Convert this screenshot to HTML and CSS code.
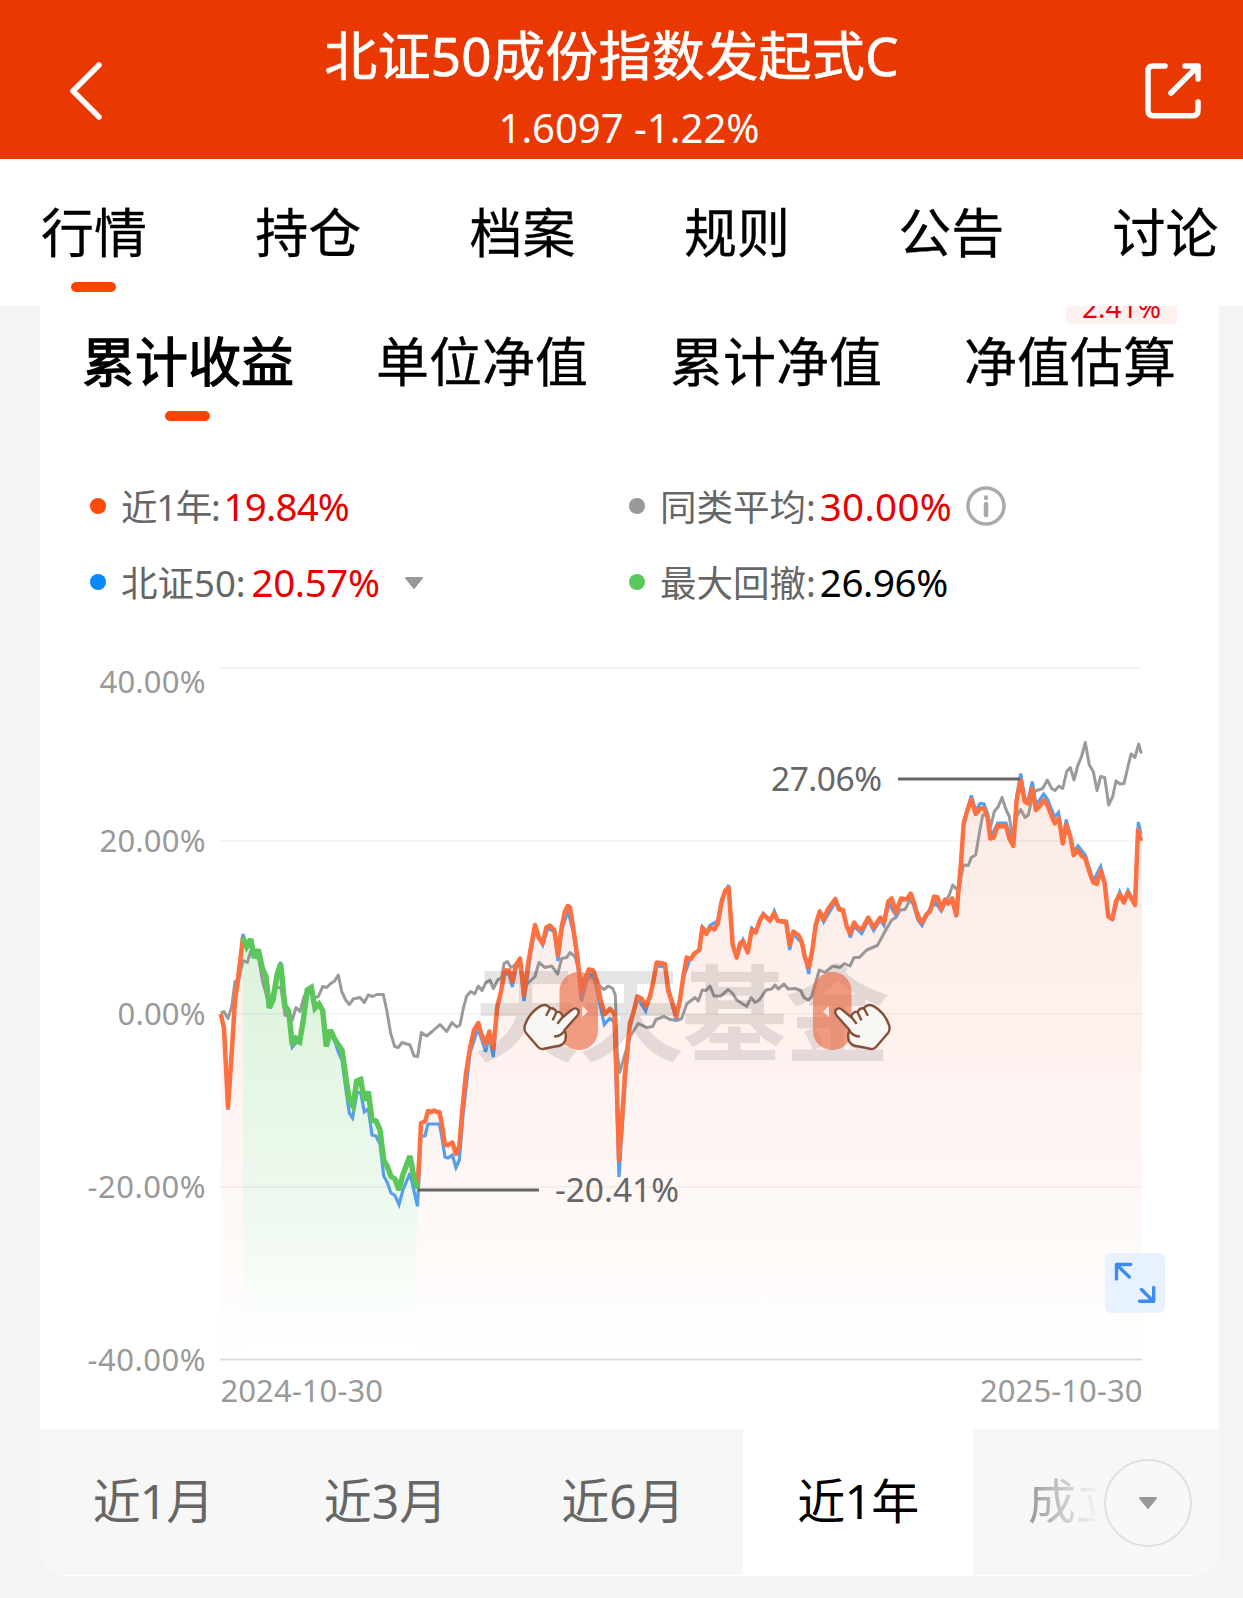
FILE: index.html
```
<!DOCTYPE html>
<html lang="zh-CN">
<head>
  <meta charset="utf-8">
  <title>北证50成份指数发起式C</title>
  <link rel="stylesheet" href="styles.css">
</head>
<body>

<header>
  <svg class="back" width="34" height="60" viewBox="0 0 34 60">
    <path d="M30 4 L4 30 L30 56"/>
  </svg>
  <div class="fund">
    <h1>北证50成份指数发起式C</h1>
    <p>1.6097 -1.22%</p>
  </div>
  <svg class="share" width="58" height="58" viewBox="0 0 58 58">
    <path d="M21 4 H9 Q4 4 4 9 V48 Q4 53.700 9 53.700 H49 Q54 53.700 54 48 V40"/>
    <path d="M41 4 H54 V17 M53 5 L27 31"/>
  </svg>
</header>

<nav>
  <a class="active">行情</a>
  <a>持仓</a>
  <a>档案</a>
  <a>规则</a>
  <a>公告</a>
  <a>讨论</a>
</nav>

<div id="card">
  <div class="tabs">
    <a class="active">累计收益</a>
    <a>单位净值</a>
    <a>累计净值</a>
    <a>净值估算<span class="badge"><b>2.41%</b></span></a>
  </div>

  <div class="legend">
    <div><i class="dot orange"></i><em>近1年:</em><span class="red n1">19.84%</span></div>
    <div><i class="dot gray"></i>同类平均:<span class="red n3">30.00%</span>
      <svg class="info" width="40" height="40" viewBox="0 0 40 40">
        <circle cx="20" cy="20" r="18"/>
        <path d="M20 18 V29"/>
        <path d="M20 11.500 V12"/>
      </svg>
    </div>
    <div><i class="dot blue"></i>北证50:<span class="red n2">20.57%</span>
      <svg class="caret" width="20" height="13" viewBox="0 0 20 13"><path d="M2 1 H18 L10 11 Z"/></svg>
    </div>
    <div><i class="dot green"></i>最大回撤:<span class="black">26.96%</span></div>
  </div>

  <svg class="chart" width="1179" height="789" viewBox="40 640 1179 789">
    <defs>
      <linearGradient id="redFill" gradientUnits="userSpaceOnUse" x1="0" y1="780" x2="0" y2="1359">
        <stop offset="0" stop-color="#f9e9e3"/>
        <stop offset="0.45" stop-color="#fef1ee"/>
        <stop offset="0.75" stop-color="#fef8f6"/>
        <stop offset="1" stop-color="#ffffff"/>
      </linearGradient>
      <linearGradient id="greenFill" gradientUnits="userSpaceOnUse" x1="0" y1="940" x2="0" y2="1350">
        <stop offset="0" stop-color="#d9f2d9"/>
        <stop offset="0.65" stop-color="#edf9ee"/>
        <stop offset="1" stop-color="#ffffff"/>
      </linearGradient>
    </defs>

    <!-- areas under the fund line -->
    <path opacity="0.95" fill="url(#redFill)" d="M220.700 1359 V1014 L224 1028 228 1107 231.700 1053 235 1000 237.300 985 243 937 V1359 Z"/>
    <path opacity="0.95" fill="url(#redFill)" d="M417.500 1359 V1188.500 L419.300 1156.500 421 1123 425 1121.500 428 1111 439.300 1112 441.700 1123 445 1145 452.300 1143 456 1154 459.300 1146.500 462.300 1110 466 1073 470 1048 474 1030 478.300 1023 481.700 1035 485.700 1044 489.300 1031.500 493.300 1048 497.300 1006.500 501 991.500 504.700 970.500 509 970.500 512.300 981.500 516 965 520 958.500 524 995 527.700 966.500 531.300 945 535 925 538.700 937.500 542.700 943.500 546.300 927.500 550 925.500 554.300 930 558 955 561.700 926.500 565 911.500 567.700 906 570 907.500 573.300 928 577.300 956.500 581.300 991.500 585.300 978 588.700 969.500 593.300 970.500 596.700 980 600.700 1000 604.700 1014 610 1009 614.300 1013.500 616.700 1080 619 1160 622 1120 625 1073 630 1023 633.700 1011.500 637.300 996.500 641.700 998.500 645.700 1006.500 650 996.500 653.300 981.500 656.700 962.500 665 964 668 990 672.300 1003 676.300 1016.500 680 1000 683.300 976.500 686.700 957.500 691 959 694.300 953.500 699.300 950 702.300 927.500 706.300 934 710 927.500 714.300 929.500 717.700 923.500 721.700 901.500 725.300 890.500 728.700 888 732.700 945 736.700 957.500 740 943.500 743 941 747.700 952.500 751.700 930 755.700 932.500 760 920 763.300 914.500 770 920.500 774.300 913.500 778 921 786 921.500 789.700 945 793.300 931.500 798.300 935 801.700 941.500 804.700 956.500 808.700 967.500 812.300 950 815.700 925 819.700 911.500 823.700 919.500 827.700 909.500 835.300 899 839 909.500 843 910 846.700 926.500 850.300 933.500 854 922.500 857.700 927.500 861.700 929.500 868.300 917.500 873.700 927.500 880.300 917.500 884 922.500 888.300 901.500 891.700 898.500 895.700 912.500 901 898.500 906.700 899.500 910.700 893.500 914.300 903.500 918 917.500 922 922.500 926.700 914 930 911.500 934 896.500 937.700 897.500 941.300 909.500 945 899.500 948.300 903.500 952.300 898.500 956.300 915 960.700 866.500 963.700 823.500 967.300 810.500 971.300 799.500 975.700 814 980 808.500 984 808.500 987.700 817.500 990.300 838.500 993.700 837.500 997.700 826 1006 826.500 1009.300 838.500 1013.300 846 1016.700 800 1020.700 780.500 1024.700 801.500 1028 803.500 1032.300 788.500 1036 810 1040 806 1043.700 800 1047.300 805 1054.700 823.500 1059 818.500 1062.700 843.500 1066.300 825 1070.300 836.500 1073.700 855 1078 850.500 1081.700 856 1085.300 858.500 1090 873.500 1093.300 882.500 1096.700 884 1100.700 870.500 1104.700 883.500 1108.300 916.500 1112.300 919 1116 901.500 1119.700 894 1123.700 902.500 1128 892.500 1135 905 1138 830 1141 841 1142 841 V1359 Z"/>
    <path opacity="0.95" fill="url(#greenFill)" d="M243 1359 V937.500 L246.700 946.500 250.700 939 254.300 958 258.300 949.500 262.300 968 266 976.500 269.300 1008 273 1000 277 975 280.700 964 284.700 1005 288.700 1011.500 292.300 1045 296 1038.500 299.700 1041.500 303.300 1020 307.300 990 311.300 987.500 315 1008 319 1004 322.700 1010.500 326.300 1046.500 330.300 1030 334.300 1038.500 338.300 1045 342 1050 345.700 1076.500 349.300 1100 353 1106 356.700 1081 360.700 1079.500 364.300 1100.500 368.300 1091.500 372 1120 376 1121 380 1130 383.700 1160 387.300 1166.500 391 1176.500 395 1179 399 1190 402.700 1175 410 1156 413.700 1176.500 417.500 1188.500 V1359 Z"/>

    <g class="grid">
      <path d="M220 668 H1142 M220 841 H1142 M220 1014 H1142 M220 1187 H1142"/>
      <path class="base" d="M220 1359.500 H1142"/>
    </g>

    <path class="line avg" d="M220.700 1013 L224 1011.500 228 1018.500 231.700 1006.500 235 981.500 238.700 980 243 960.500 247.300 962.500 250.700 951.500 254.300 955 258.300 956.500 262.300 980 266.700 996.500 270 1003.500 274 990 277 987.500 281 987.500 285 1015 289 1016.500 292.300 1020 296 1007.500 300 1011.500 304 996.500 308 990 315 997.500 318.300 996.500 322.700 986.500 326.700 987.500 330.700 983.500 334.700 981 338.300 975 341.700 991.500 345.700 1000 349.300 1004.500 353.300 999 360 997.500 364.300 1002.500 368.300 995 372.700 996.500 376.700 994.500 383.300 994.500 386.700 1010 390.700 1033.500 394.700 1046.500 398.300 1047.500 402 1042.500 410 1045 414 1056 417.700 1056.500 421.300 1032.500 426.700 1036 432.700 1031 440 1024.500 446.700 1031.500 452 1022.500 456.700 1027 460 1025 463.300 1008.500 466.700 996 470.700 991.500 474.700 994 478.300 986 482 990.500 486 982.500 490 980 493.300 988.500 497.700 980 501.700 977.500 504 963.500 507.300 961.500 511 967.500 515 965 519.300 961.500 523.300 976.500 527.700 983.500 535 976.500 539 962.500 545 967.500 551.700 966 557.700 974 561.700 958.500 566.700 957.500 570 952.500 575 956.500 580 976 585 983.500 590 976.500 595 980 600 986.500 604 989.500 608.300 986 612.700 988.500 615.300 995 617.300 1053 619.700 1072.500 623.300 1060 630 1036.500 638.300 1023.500 646.700 1027.500 652.700 1026.500 656 1019.500 664 1016.500 670 1019.500 676.700 1020.500 681.700 1018.500 686.700 1004 695 997.500 698.300 1001 702.300 990 706 990.500 710 986 714 996 720.700 996 728.300 989.500 732.700 993.500 736.700 1000 746.700 1006.500 751 997.500 755 1002.500 759.300 1000 766 990 771.700 989 775 985 778.300 989 784 984 788.300 989 795 988.500 800.700 990.500 804 997.500 808.300 1000 811.700 996.500 815 985 819.300 970 825 972.500 832.700 966 840 967.500 844.300 963.500 850 966 854 957.500 859.300 957.500 866.700 950 877.300 945.500 886.700 928.500 891.700 920 896 917.500 900 910 905 909.500 910 900 914 905 922 922 930 911 933 905 937 905 941 909 949.300 895 952.700 885 956.700 889.500 960 884 963.300 865 968.300 865.500 971.300 857.500 975.700 855 979.300 833.500 982.700 815 987.300 815 990.700 826.500 994.300 811.500 998.300 806.500 1002 797.500 1006 809.500 1009.300 816.500 1012.300 836.500 1016.700 816.500 1020.700 809.500 1025 817.500 1028.300 815 1031.700 800 1035 791 1042.700 788.500 1047.300 780 1051.700 788.500 1055 790.500 1059 786 1062.700 788.500 1066.700 771.500 1070.300 767.500 1074 780 1078 765 1081.700 756 1085.300 742.500 1089.300 765 1093.300 771.500 1097 790.500 1100.700 776.500 1104.700 777.500 1108.700 805 1112.700 796.500 1116 781 1120 784 1124 783.500 1128 766.500 1131 754 1135 757.500 1138.700 744 1141.300 753.500"/>

    <!-- index line, only the stretches that come out from behind the fund line -->
    <path class="line idx" d="M224 1028 L228 1110 231.700 1053 M239 975 L243 934 246 946 M277 975 L280.700 962 284 1000 M288.700 1015 L292.300 1047 296 1042.500 299.700 1043 304 1015 M330 1030 L334.300 1040 338.300 1052 342 1060 345.700 1088 349.300 1113 352.500 1118 357 1093 360.700 1092.500 364.300 1112 368.300 1109 372 1135 376 1136 380 1144 383.700 1176 387.300 1182.500 391 1193 395 1195.500 399 1204.500 403 1190 410 1173 417.500 1206.500 421 1136 425 1136 428 1124 439.300 1124 441.700 1136 445 1157 448 1158 452.300 1155 456 1167.500 459.300 1160 463 1115 470 1053 478 1028 485.700 1052 489.300 1036 493.300 1057 497.300 1010 504.700 974 509 974 512.300 987 516 969 520 962 524 1001 531.300 950 535 930 542.700 945 548 928 554.300 932 558 961 561.700 930 568 911 573.300 932 577.300 960 581.300 1001 588.700 974 593.300 975 600.700 1008 604.300 1024.500 609.700 1018.500 614.300 1022 619 1177 625 1083 630 1028 637.300 998 645.700 1011 653.300 983 656.700 966 665 967 672 1005 676.300 1020 683 979 690 959 699.300 950 702.300 927 706.300 932 710 925.500 717.700 921 721.700 899 728.700 885 732.700 945 736.700 957 743 940 747.700 952 751.700 928 755.700 931 763.300 913.500 770 921 774.300 911 778 921 786 923 789.700 950 793.300 934 801.700 943 808.700 974 815.700 927 819.700 913 823.700 922 835.300 902 843 912 850.300 937.500 854 926 861.700 933.500 868.300 920 873.700 930.500 880.300 920 884 925.500 888.300 903 895.700 915 901 901 910.700 896 918 920 922 925.500 934 900 941.300 911 945 903 952.300 902 956.300 917 960.700 866 963.700 822 971.300 795.500 975.700 811 980 803.500 984 804 987.700 814 991 837 997.700 823 1006 823 1013.300 845 1016.700 796 1020.700 773.500 1024.700 798 1028 800 1032.300 781.500 1036 805 1043.700 794 1047.300 799 1054.700 817 1058.500 812.500 1062.700 840 1066.300 819.500 1073.700 852 1078 846 1085.300 855 1093.300 881 1100.700 866.500 1104.700 882 1108.300 915 1112.300 919 1119.700 892 1123.700 901 1128 890.500 1135 903 1138.300 822 1141 834"/>

    <path class="line fund-line" d="M220.700 1014 L224 1028 228 1107 231.700 1053 235 1000 237.300 985 243 937"/>
    <path class="line fund-line" d="M417.500 1188.500 L419.300 1156.500 421 1123 425 1121.500 428 1111 431 1112 434 1110.500 437 1112 439.300 1112 441.700 1123 445 1145 448 1145 452.300 1142.500 456 1154 459.300 1146.500 462.300 1110 466 1073 470 1048 474 1030 478.300 1023 481.700 1035 485.700 1044 489.300 1031.500 493.300 1048 497.300 1006.500 501 991.500 504.700 970.500 509 970.500 512.300 981.500 516 965 520 958.500 524 995 527.700 966.500 531.300 945 535 925 538.700 937.500 542.700 943.500 546.300 927.500 550 925.500 554.300 930 558 955 561.700 926.500 565 911.500 567.700 906 570 907.500 573.300 928 577.300 956.500 581.300 991.500 585.300 978 588.700 969.500 593.300 970.500 596.700 980 600.700 1000 604.700 1014 610 1009 614.300 1013.500 616.700 1080 619 1160 622 1120 625 1073 630 1023 633.700 1011.500 637.300 996.500 641.700 998.500 645.700 1006.500 650 996.500 653.300 981.500 656.700 962.500 665 964 668 990 672.300 1003 676.300 1016.500 680 1000 683.300 976.500 686.700 957.500 691 959 694.300 953.500 699.300 950 702.300 927.500 706.300 934 710 927.500 714.300 929.500 717.700 923.500 721.700 901.500 725.300 890.500 728.700 888 732.700 945 736.700 957.500 740 943.500 743 941 747.700 952.500 751.700 930 755.700 932.500 760 920 763.300 914.500 770 920.500 774.300 913.500 778 921 786 921.500 789.700 945 793.300 931.500 798.300 935 801.700 941.500 804.700 956.500 808.700 967.500 812.300 950 815.700 925 819.700 911.500 823.700 919.500 827.700 909.500 835.300 899 839 909.500 843 910 846.700 926.500 850.300 933.500 854 922.500 857.700 927.500 861.700 929.500 868.300 917.500 873.700 927.500 880.300 917.500 884 922.500 888.300 901.500 891.700 898.500 895.700 912.500 901 898.500 906.700 899.500 910.700 893.500 914.300 903.500 918 917.500 922 922.500 926.700 914 930 911.500 934 896.500 937.700 897.500 941.300 909.500 945 899.500 948.300 903.500 952.300 898.500 956.300 915 960.700 866.500 963.700 823.500 967.300 810.500 971.300 799.500 975.700 814 980 808.500 984 808.500 987.700 817.500 990.300 838.500 993.700 837.500 997.700 826 1006 826.500 1009.300 838.500 1013.300 846 1016.700 800 1020.700 780.500 1024.700 801.500 1028 803.500 1032.300 788.500 1036 810 1040 806 1043.700 800 1047.300 805 1054.700 823.500 1059 818.500 1062.700 843.500 1066.300 825 1070.300 836.500 1073.700 855 1078 850.500 1081.700 856 1085.300 858.500 1090 873.500 1093.300 882.500 1096.700 884 1100.700 870.500 1104.700 883.500 1108.300 916.500 1112.300 919 1116 901.500 1119.700 894 1123.700 902.500 1128 892.500 1135 905 1138 830 1141 841"/>
    <path class="line drawdown" d="M243 937.500 L246.700 946.500 250.700 939 254.300 958 258.300 949.500 262.300 968 266 976.500 269.300 1008 273 1000 277 975 280.700 964 284.700 1005 288.700 1011.500 292.300 1045 296 1038.500 299.700 1041.500 303.300 1020 307.300 990 311.300 987.500 315 1008 319 1004 322.700 1010.500 326.300 1046.500 330.300 1030 334.300 1038.500 338.300 1045 342 1050 345.700 1076.500 349.300 1100 353 1106 356.700 1081 360.700 1079.500 364.300 1100.500 368.300 1091.500 372 1120 376 1121 380 1130 383.700 1160 387.300 1166.500 391 1176.500 395 1179 399 1190 402.700 1175 410 1156 413.700 1176.500 417.500 1188.500"/>

    <path class="leader" d="M898 779 H1020 M418 1190 H539"/>
    <text class="mark" x="771" y="791" textLength="111">27.06%</text>
    <text class="mark" x="555" y="1202" textLength="124">-20.41%</text>

    <text class="watermark" x="474 579 682 785" y="1053">天天基金</text>

    <!-- drag handles -->
    <rect class="handle" x="559.500" y="972" width="38.500" height="78" rx="19"/>
    <rect class="handle" x="813" y="972" width="38.500" height="78" rx="19"/>
    <path class="tip" d="M582 1006 L588 1011.500 582 1017 Z M829 1006 L823 1011.500 829 1017 Z"/>
    <g id="hand">
      <path d="M571.500 1010 Q576 1006.500 578.500 1010.500 Q579.500 1013 577 1016 L564.500 1030 Q567 1035 565 1041 Q563 1046 555 1046.500 L543 1049 Q540.500 1049.500 538 1047 L526 1033 Q523.500 1030 525 1025 Q528 1016 535 1010 Q541 1004.500 545.500 1005 Q549 1006 550 1008.500 Q554 1007.500 556.500 1012 Q561 1011 563 1017 Z"/>
      <path d="M546.500 1015 L550 1008.500 M553 1019.500 L556.500 1012 M558 1023 L563 1016.500 M564.500 1031 Q561 1036 555 1036.500"/>
    </g>
    <use href="#hand" transform="matrix(-1 0 0 1 1414 0)"/>

    <g class="axis">
      <text x="99.500" y="693" textLength="106">40.00%</text>
      <text x="99.500" y="852" textLength="106">20.00%</text>
      <text x="117.500" y="1025" textLength="88">0.00%</text>
      <text x="87.500" y="1198" textLength="118">-20.00%</text>
      <text x="87.500" y="1371" textLength="118">-40.00%</text>
      <text x="220.500" y="1402" textLength="162.500">2024-10-30</text>
      <text x="980" y="1402" textLength="162.500">2025-10-30</text>
    </g>

    <g class="expand">
      <rect x="1105" y="1253" width="60" height="60" rx="6"/>
      <path d="M1130.700 1264.500 H1116.500 V1279 M1117 1265 L1129.300 1277 M1139.500 1301.300 H1153.700 V1287.500 M1153 1301 L1141.500 1289.500"/>
    </g>
  </svg>

  <div class="range">
    <a class="r1">近1月</a>
    <a class="r2">近3月</a>
    <a class="r3">近6月</a>
    <a class="r4 active">近1年</a>
    <a class="r5"><span>成立</span></a>
    <button>
      <svg width="20" height="13" viewBox="0 0 20 13"><path d="M2 1 H18 L10 11 Z"/></svg>
    </button>
  </div>
</div>

</body>
</html>
```
FILE: styles.css
```
* {
  box-sizing: border-box;
}

body {
  margin: 0;
  background-color: #f4f4f4;
  color: #000;
  font-family: "Noto Sans", "Noto Sans CJK SC", sans-serif;
}

header {
  display: flex;
  height: 159px;
  padding: 0 41px 0 69px;
  background-color: #ea3803;
  color: white;
}

header svg {
  fill: none;
  stroke: white;
  stroke-width: 5.5;
  stroke-linecap: round;
  stroke-linejoin: round;
}

.back {
  margin-top: 61px;
}

.share {
  margin-top: 62px;
}

.fund {
  flex: 1;
  text-align: center;
}

h1 {
  width: 574px;
  margin: 20px auto 0 223px;
  overflow: hidden;
  font-size: 53px;
  font-weight: 400;
  line-height: 72px;
  white-space: nowrap;
  text-indent: -3px;
  letter-spacing: 0.3px;
  -webkit-text-stroke: 0.7px white;
}

.fund p {
  width: 262px;
  margin: 10px 0 0 395px;
  font-size: 40px;
  line-height: 52px;
  white-space: nowrap;
}

nav {
  display: flex;
  gap: 108.300px;
  height: 147px;
  padding-left: 41px;
  background-color: white;
}

nav a, .tabs a {
  position: relative;
  font-size: 53px;
  white-space: nowrap;
  -webkit-text-stroke: 0.3px black;
}

nav a {
  padding-top: 38px;
  line-height: 72px;
}

.tabs .active {
  -webkit-text-stroke: 1.3px black;
}

nav .active::after, .tabs .active::after {
  content: "";
  position: absolute;
  left: 50%;
  width: 45px;
  height: 10px;
  margin-left: -23px;
  border-radius: 5px;
  background-color: #ff4400;
}

nav .active::after {
  top: 123px;
}

#card {
  width: 1179px;
  height: 1270px;
  margin-left: 40px;
  overflow: hidden;
  border-radius: 0 0 26px 26px;
  background-color: white;
}

.tabs {
  display: flex;
  gap: 82px;
  height: 162px;
  padding-left: 42px;
}

.tabs a {
  padding-top: 20px;
  line-height: 72px;
}

.tabs .active::after {
  top: 105px;
}

.badge {
  position: absolute;
  top: -20px;
  right: -1px;
  width: 111px;
  height: 38px;
  border-radius: 5px;
  background-color: #fff0f0;
  color: #e60012;
  font-size: 28px;
  line-height: 43px;
  text-align: center;
  -webkit-text-stroke: 0;
}

.badge b {
  font-weight: 400;
}

.legend {
  display: grid;
  grid-template-columns: 539px 1fr;
  grid-auto-rows: 76px;
  height: 172px;
  padding-left: 50px;
}

.legend div {
  display: flex;
  align-items: center;
  height: 75px;
  color: #666;
  font-size: 36.500px;
  white-space: nowrap;
}

.legend em {
  font-style: normal;
  letter-spacing: -1.3px;
}

.legend span {
  margin-left: 4px;
  font-size: 38.500px;
}

.red {
  color: #e80000;
}

.legend .n1 {
  letter-spacing: -0.8px;
}

.legend .n2 {
  margin-left: 6px;
  letter-spacing: -0.4px;
}

.legend .n3 {
  letter-spacing: 0.3px;
}

.legend .black {
  color: #000;
  letter-spacing: -0.4px;
}

.dot {
  width: 16px;
  height: 16px;
  margin-right: 15px;
  border-radius: 50%;
}

.orange { background-color: #ff4b0a; }
.gray { background-color: #999; }
.blue { background-color: #0a88ff; }
.green { background-color: #5ac85a; }

.info {
  margin-left: 14px;
  fill: none;
  stroke: #aaa;
  stroke-width: 3.5;
  stroke-linecap: round;
}

.info path {
  stroke-width: 4.5;
}

.caret {
  margin: 4px 0 0 24px;
}

.caret path, .range button path {
  fill: #999;
  stroke: #999;
  stroke-width: 2;
  stroke-linejoin: round;
}

.chart {
  display: block;
}

.grid path {
  stroke: #000;
  stroke-opacity: 0.04;
  stroke-width: 2;
}

.grid .base {
  stroke: #ddd;
  stroke-opacity: 1;
}

.line {
  fill: none;
  stroke-linejoin: miter;
  stroke-miterlimit: 3;
}

.avg {
  stroke: #888;
  stroke-opacity: 0.85;
  stroke-width: 3;
  stroke-linejoin: round;
}

.idx {
  stroke: #559fee;
  stroke-width: 3.2;
}

.fund-line {
  stroke: #ff7040;
  stroke-width: 4.5;
  stroke-linejoin: round;
}

.drawdown {
  stroke: #5bc75b;
  stroke-width: 5.5;
}

.leader {
  stroke: #666;
  stroke-width: 3;
}

.mark {
  fill: #666;
  font-size: 33.500px;
}

.watermark {
  fill: #000;
  fill-opacity: 0.1;
  font-family: "Noto Sans CJK SC", sans-serif;
  font-size: 105px;
  font-weight: 700;
}

.handle {
  fill: #ea6e46;
  fill-opacity: 0.66;
}

.tip {
  fill: #fff;
  fill-opacity: 0.75;
}

#hand path {
  fill: #f8f7f4;
  stroke: #85503a;
  stroke-width: 2.4;
  stroke-linejoin: round;
  stroke-linecap: round;
}

#hand path + path {
  fill: none;
}

.axis {
  fill: #999;
  font-size: 31px;
}

.expand rect {
  fill: #e4eeff;
  fill-opacity: 0.85;
}

.expand path {
  fill: none;
  stroke: #3f8cf0;
  stroke-width: 3.4;
  stroke-linecap: round;
  stroke-linejoin: round;
}

.range {
  position: relative;
  display: flex;
  height: 146px;
  background-color: #f7f7f7;
  color: #666;
  font-size: 48px;
  line-height: 143px;
}

.range a {
  text-align: center;
}

.r1 {
  width: 226px;
  letter-spacing: -1px;
}

.r2 { width: 239px; }
.r3 { width: 236px; }

.r4 {
  width: 230px;
  margin-left: 2px;
  letter-spacing: -0.7px;
}

.range .active {
  background-color: white;
  color: #000;
}

.range .r5 {
  padding-left: 55px;
}

.r5 span {
  background-image: linear-gradient(90deg, #999, #d4d4d4 45%, #f7f7f7 75%);
  background-clip: text;
  color: transparent;
}

.range button {
  position: absolute;
  top: 30px;
  left: 1064px;
  display: flex;
  align-items: center;
  justify-content: center;
  width: 88px;
  height: 88px;
  padding: 0;
  border: 2px solid #e0e0e0;
  border-radius: 50%;
  background-color: #f8f8f8;
}
```
